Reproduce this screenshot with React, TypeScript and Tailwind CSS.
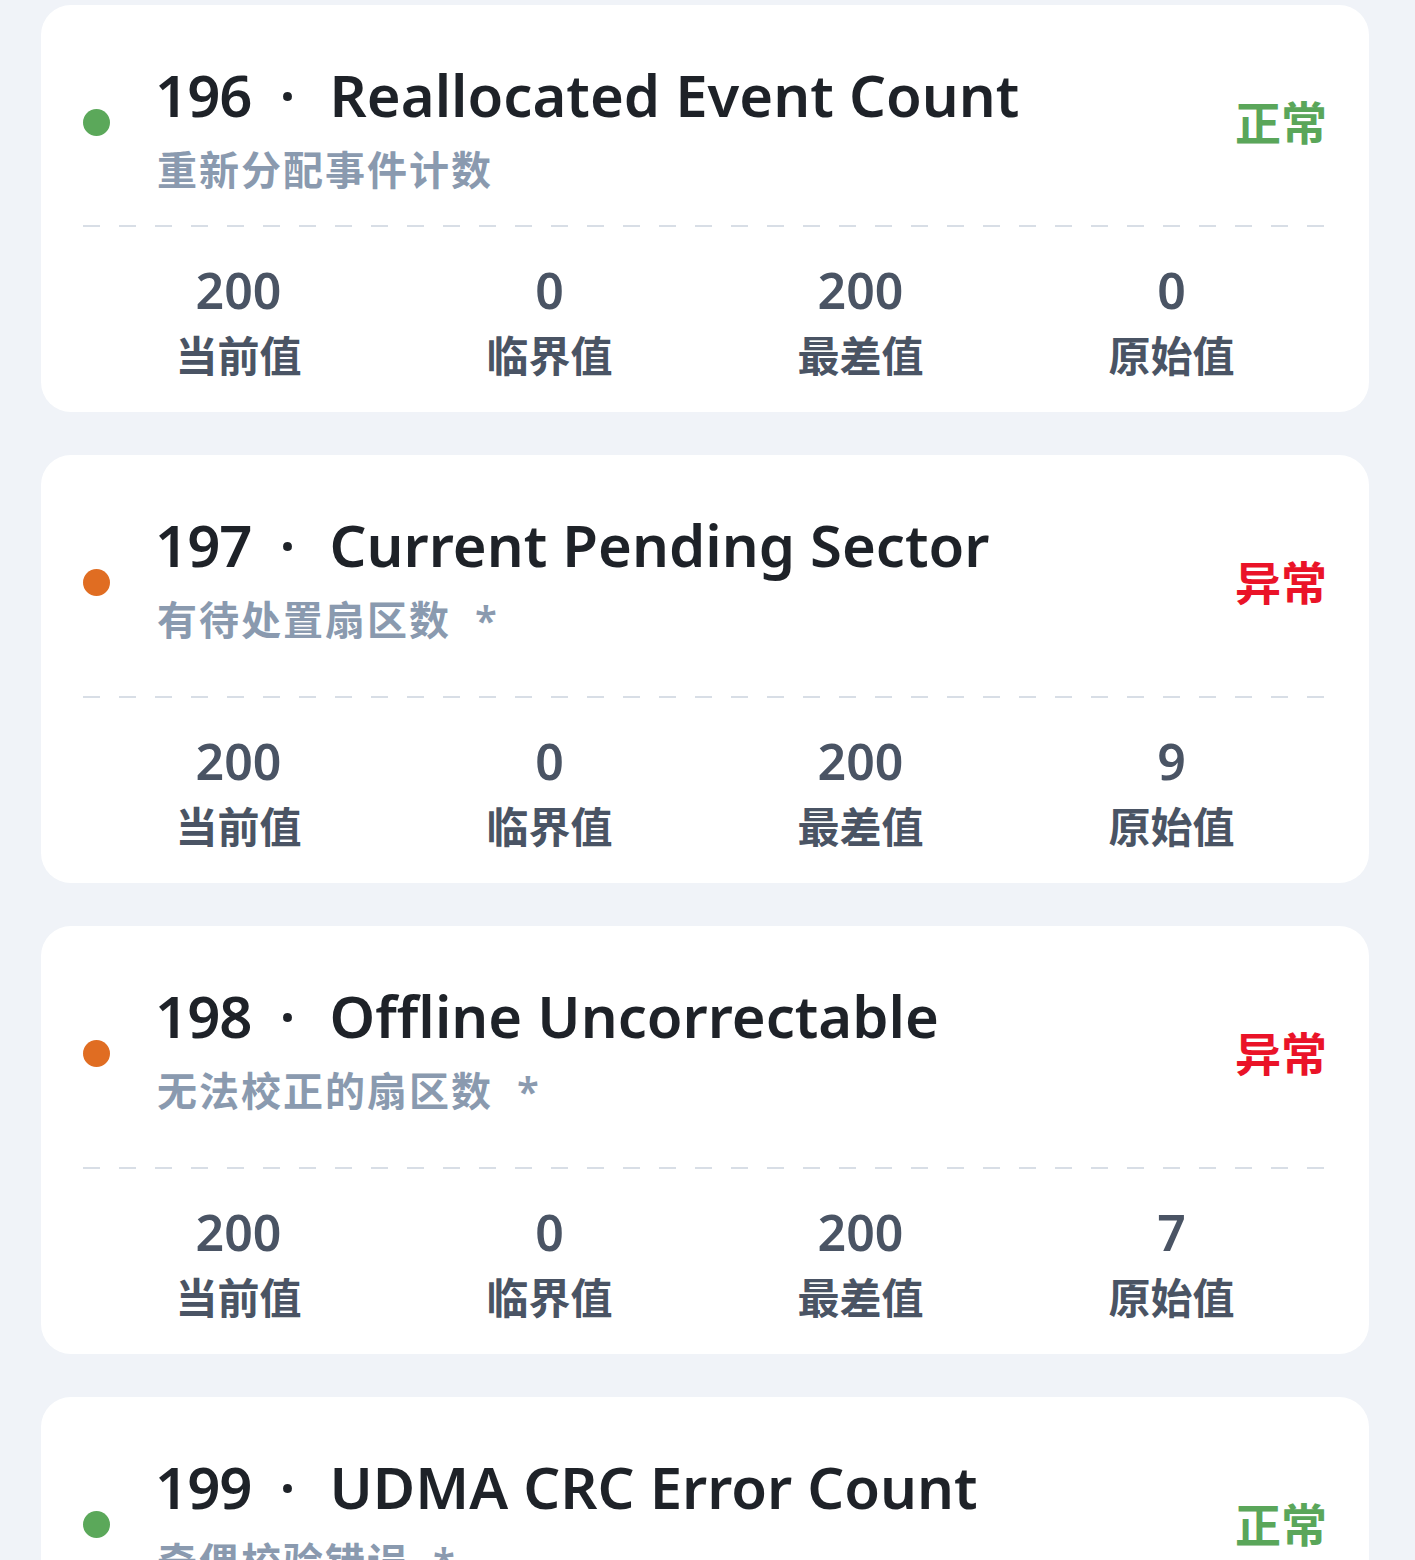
import React from "react";

type Item = {
  id: string;
  name: string;
  zh: string;
  star: boolean;
  ok: boolean;
  values: [string, string, string, string];
};

const items: Item[] = [
  { id: "196", name: "Reallocated Event Count", zh: "重新分配事件计数", star: false, ok: true, values: ["200", "0", "200", "0"] },
  { id: "197", name: "Current Pending Sector", zh: "有待处置扇区数", star: true, ok: false, values: ["200", "0", "200", "9"] },
  { id: "198", name: "Offline Uncorrectable", zh: "无法校正的扇区数", star: true, ok: false, values: ["200", "0", "200", "7"] },
  { id: "199", name: "UDMA CRC Error Count", zh: "奇偶校验错误", star: true, ok: true, values: ["200", "0", "200", "0"] },
];

const labels = ["当前值", "临界值", "最差值", "原始值"];

const font = { fontFamily: '"Noto Sans", "Noto Sans CJK SC", sans-serif' };

function Card({ item }: { item: Item }) {
  return (
    <div className="bg-white rounded-[30px] px-[42px] pt-[46px] pb-[28px]">
      <div className="flex items-center">
        <div className={`w-[27px] h-[27px] rounded-full shrink-0 ${item.ok ? "bg-[#5ba85a]" : "bg-[#e06d22]"}`} />
        <div className="ml-[45px] flex flex-col">
          <div className="text-[58px] leading-[88px] font-semibold text-[#1e2228] whitespace-nowrap">
            <span className="tracking-[-1px]">{item.id}</span>
            <span className="ml-[28px] mr-[34px]">·</span>
            <span>{item.name}</span>
          </div>
          <div className="mt-[8px] pl-[2px] text-[40px] leading-[46px] font-semibold text-[#8a9aaf] tracking-[2px] whitespace-nowrap">
            <span>{item.zh}</span>
            {item.star && <span className="inline-block align-top h-[67px] ml-[24px]">*</span>}
          </div>
        </div>
        <div className={`ml-auto text-[46px] font-bold ${item.ok ? "text-[#5aa65a]" : "text-[#ea1328]"}`}>
          {item.ok ? "正常" : "异常"}
        </div>
      </div>
      <div className="mt-[32px] h-[2px] bg-[repeating-linear-gradient(to_right,#d8dee6_0_17px,transparent_17px_36px)]" />
      <div className="grid grid-cols-4 mt-[33px]">
        {item.values.map((v, i) => (
          <div key={i} className="flex flex-col items-center">
            <div className="text-[50px] leading-[60px] font-semibold text-[#4a5464]">{v}</div>
            <div className="mt-[8px] text-[42px] leading-[56px] font-semibold text-[#4a5464]">{labels[i]}</div>
          </div>
        ))}
      </div>
    </div>
  );
}

export default function App() {
  return (
    <div className="min-h-screen bg-[#f0f3f8] pl-[41px] pr-[46px] pt-[5px] pb-[40px] flex flex-col gap-[43px]" style={font}>
      {items.map((it) => (
        <Card key={it.id} item={it} />
      ))}
    </div>
  );
}
